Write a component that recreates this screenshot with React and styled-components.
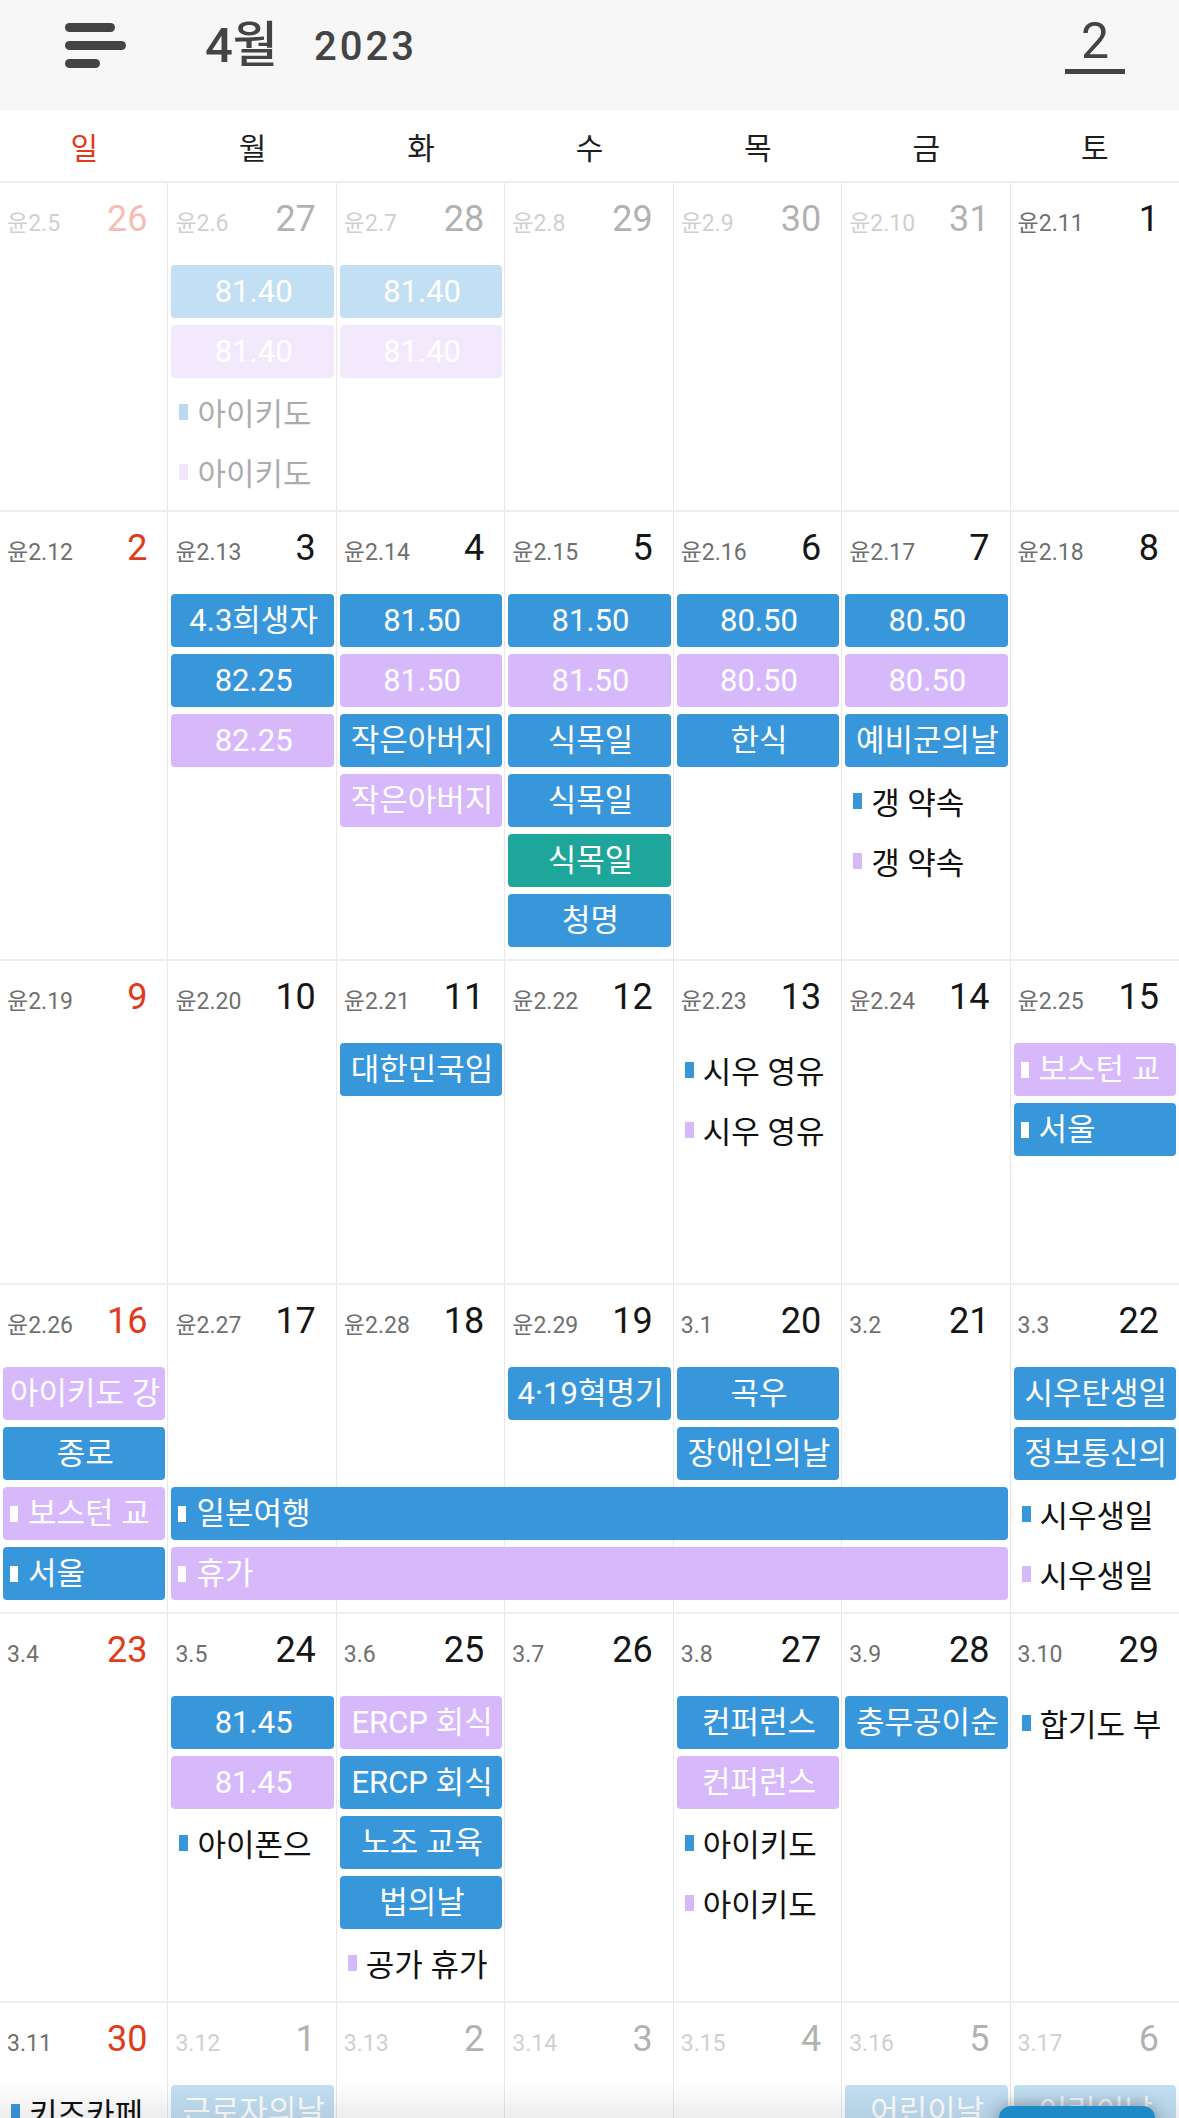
import React from "react";
import styled, { createGlobalStyle } from "styled-components";

const FONT = `Roboto, "Noto Sans CJK KR", sans-serif`;

const COLORS = {
  blue: "#3897da",
  purple: "#d6b8fb",
  teal: "#1fa69a",
};

const WEEKDAYS = ["일", "월", "화", "수", "목", "금", "토"];

// days: [lunar date, solar date, outside this month]
const WEEKS = [
  {
    slots: 4,
    days: [
      ["윤2.5", 26, true],
      ["윤2.6", 27, true],
      ["윤2.7", 28, true],
      ["윤2.8", 29, true],
      ["윤2.9", 30, true],
      ["윤2.10", 31, true],
      ["윤2.11", 1, false],
    ],
    events: [
      { col: 1, slot: 0, color: "blue", label: "81.40", faded: true },
      { col: 1, slot: 1, color: "purple", label: "81.40", faded: true },
      { col: 1, slot: 2, color: "blue", label: "아이키도", kind: "dot", faded: true },
      { col: 1, slot: 3, color: "purple", label: "아이키도", kind: "dot", faded: true },
      { col: 2, slot: 0, color: "blue", label: "81.40", faded: true },
      { col: 2, slot: 1, color: "purple", label: "81.40", faded: true },
    ],
  },
  {
    slots: 6,
    days: [
      ["윤2.12", 2],
      ["윤2.13", 3],
      ["윤2.14", 4],
      ["윤2.15", 5],
      ["윤2.16", 6],
      ["윤2.17", 7],
      ["윤2.18", 8],
    ],
    events: [
      { col: 1, slot: 0, color: "blue", label: "4.3희생자" },
      { col: 1, slot: 1, color: "blue", label: "82.25" },
      { col: 1, slot: 2, color: "purple", label: "82.25" },
      { col: 2, slot: 0, color: "blue", label: "81.50" },
      { col: 2, slot: 1, color: "purple", label: "81.50" },
      { col: 2, slot: 2, color: "blue", label: "작은아버지" },
      { col: 2, slot: 3, color: "purple", label: "작은아버지" },
      { col: 3, slot: 0, color: "blue", label: "81.50" },
      { col: 3, slot: 1, color: "purple", label: "81.50" },
      { col: 3, slot: 2, color: "blue", label: "식목일" },
      { col: 3, slot: 3, color: "blue", label: "식목일" },
      { col: 3, slot: 4, color: "teal", label: "식목일" },
      { col: 3, slot: 5, color: "blue", label: "청명" },
      { col: 4, slot: 0, color: "blue", label: "80.50" },
      { col: 4, slot: 1, color: "purple", label: "80.50" },
      { col: 4, slot: 2, color: "blue", label: "한식" },
      { col: 5, slot: 0, color: "blue", label: "80.50" },
      { col: 5, slot: 1, color: "purple", label: "80.50" },
      { col: 5, slot: 2, color: "blue", label: "예비군의날" },
      { col: 5, slot: 3, color: "blue", label: "갱 약속", kind: "dot" },
      { col: 5, slot: 4, color: "purple", label: "갱 약속", kind: "dot" },
    ],
  },
  {
    slots: 2,
    days: [
      ["윤2.19", 9],
      ["윤2.20", 10],
      ["윤2.21", 11],
      ["윤2.22", 12],
      ["윤2.23", 13],
      ["윤2.24", 14],
      ["윤2.25", 15],
    ],
    events: [
      { col: 2, slot: 0, color: "blue", label: "대한민국임" },
      { col: 4, slot: 0, color: "blue", label: "시우 영유", kind: "dot" },
      { col: 4, slot: 1, color: "purple", label: "시우 영유", kind: "dot" },
      { col: 6, slot: 0, color: "purple", label: "보스턴 교", mark: true },
      { col: 6, slot: 1, color: "blue", label: "서울", mark: true },
    ],
  },
  {
    slots: 4,
    days: [
      ["윤2.26", 16],
      ["윤2.27", 17],
      ["윤2.28", 18],
      ["윤2.29", 19],
      ["3.1", 20],
      ["3.2", 21],
      ["3.3", 22],
    ],
    events: [
      { col: 0, slot: 0, color: "purple", label: "아이키도 강" },
      { col: 0, slot: 1, color: "blue", label: "종로" },
      { col: 0, slot: 2, color: "purple", label: "보스턴 교", mark: true },
      { col: 0, slot: 3, color: "blue", label: "서울", mark: true },
      { col: 3, slot: 0, color: "blue", label: "4·19혁명기" },
      { col: 4, slot: 0, color: "blue", label: "곡우" },
      { col: 4, slot: 1, color: "blue", label: "장애인의날" },
      { col: 6, slot: 0, color: "blue", label: "시우탄생일" },
      { col: 6, slot: 1, color: "blue", label: "정보통신의" },
      { col: 6, slot: 2, color: "blue", label: "시우생일", kind: "dot" },
      { col: 6, slot: 3, color: "purple", label: "시우생일", kind: "dot" },
      { col: 1, span: 5, slot: 2, color: "blue", label: "일본여행", mark: true },
      { col: 1, span: 5, slot: 3, color: "purple", label: "휴가", mark: true },
    ],
  },
  {
    slots: 5,
    days: [
      ["3.4", 23],
      ["3.5", 24],
      ["3.6", 25],
      ["3.7", 26],
      ["3.8", 27],
      ["3.9", 28],
      ["3.10", 29],
    ],
    events: [
      { col: 1, slot: 0, color: "blue", label: "81.45" },
      { col: 1, slot: 1, color: "purple", label: "81.45" },
      { col: 1, slot: 2, color: "blue", label: "아이폰으", kind: "dot" },
      { col: 2, slot: 0, color: "purple", label: "ERCP 회식" },
      { col: 2, slot: 1, color: "blue", label: "ERCP 회식" },
      { col: 2, slot: 2, color: "blue", label: "노조 교육" },
      { col: 2, slot: 3, color: "blue", label: "법의날" },
      { col: 2, slot: 4, color: "purple", label: "공가 휴가", kind: "dot" },
      { col: 4, slot: 0, color: "blue", label: "컨퍼런스" },
      { col: 4, slot: 1, color: "purple", label: "컨퍼런스" },
      { col: 4, slot: 2, color: "blue", label: "아이키도", kind: "dot" },
      { col: 4, slot: 3, color: "purple", label: "아이키도", kind: "dot" },
      { col: 5, slot: 0, color: "blue", label: "충무공이순" },
      { col: 6, slot: 0, color: "blue", label: "합기도 부", kind: "dot" },
    ],
  },
  {
    slots: 1,
    days: [
      ["3.11", 30],
      ["3.12", 1, true],
      ["3.13", 2, true],
      ["3.14", 3, true],
      ["3.15", 4, true],
      ["3.16", 5, true],
      ["3.17", 6, true],
    ],
    events: [
      { col: 0, slot: 0, color: "blue", label: "키즈카페", kind: "dot" },
      { col: 1, slot: 0, color: "blue", label: "근로자의날", faded: true },
      { col: 5, slot: 0, color: "blue", label: "어린이날", faded: true },
      { col: 6, slot: 0, color: "blue", label: "어린이날", faded: true },
    ],
  },
];

const Week = ({ week }) => (
  <WeekGrid $slots={week.slots}>
    {week.days.map(([lunar, date, faded], i) => (
      <DayCell key={i} $col={i}>
        <CellHead $faded={faded}>
          <Lunar>{lunar}</Lunar>
          <DateNum $sunday={i === 0}>{date}</DateNum>
        </CellHead>
      </DayCell>
    ))}
    {week.events.map((ev, i) =>
      ev.kind === "dot" ? (
        <DotItem key={i} $col={ev.col} $slot={ev.slot} $faded={ev.faded}>
          <Marker $color={COLORS[ev.color]} />
          <DotText>{ev.label}</DotText>
        </DotItem>
      ) : (
        <Bar
          key={i}
          $col={ev.col}
          $span={ev.span || 1}
          $slot={ev.slot}
          $color={COLORS[ev.color]}
          $faded={ev.faded}
        >
          {ev.mark && <Marker $color="#ffffff" $small />}
          <BarText $left={ev.mark}>{ev.label}</BarText>
        </Bar>
      )
    )}
  </WeekGrid>
);

export default function App() {
  return (
    <>
      <GlobalStyle />
      <Screen>
        <TopBar>
          <MenuIcon>
            <MenuLine $w={50} />
            <MenuLine $w={61} />
            <MenuLine $w={35} />
          </MenuIcon>
          <Month>4월</Month>
          <Year>2023</Year>
          <TodayBadge>2</TodayBadge>
        </TopBar>

        <WeekdayRow>
          {WEEKDAYS.map((d, i) => (
            <Weekday key={d} $sunday={i === 0}>
              {d}
            </Weekday>
          ))}
        </WeekdayRow>

        {WEEKS.map((w, i) => (
          <Week key={i} week={w} />
        ))}

        <BottomShade />
        <Fab />
      </Screen>
    </>
  );
}

const GlobalStyle = createGlobalStyle`
  html, body {
    margin: 0;
    padding: 0;
    background: #ffffff;
  }
  body {
    font-family: ${FONT};
    color: #222222;
  }
  * {
    box-sizing: border-box;
  }
`;

const Screen = styled.div`
  position: relative;
  width: 100%;
  height: 100vh;
  overflow: hidden;
  background: #ffffff;
`;

const TopBar = styled.header`
  display: flex;
  align-items: center;
  height: 110px;
  padding: 0 54px 20px 65px;
  background: #f7f7f7;
  color: #444444;
`;

const MenuIcon = styled.div`
  display: flex;
  flex-direction: column;
  gap: 9px;
  width: 61px;
`;

const MenuLine = styled.span`
  display: block;
  width: ${(p) => p.$w}px;
  height: 9px;
  border-radius: 5px;
  background: #444444;
`;

const Month = styled.div`
  margin-left: 79px;
  font-size: 49px;
  font-weight: 500;
  line-height: 1;
`;

const Year = styled.div`
  margin-left: 36px;
  margin-top: 4px;
  font-size: 40px;
  font-weight: 500;
  letter-spacing: 3px;
  line-height: 1;
`;

const TodayBadge = styled.div`
  margin-left: auto;
  width: 60px;
  padding-bottom: 3px;
  border-bottom: 5px solid #444444;
  text-align: center;
  font-size: 50px;
  line-height: 50px;
  color: #444444;
`;

const WeekdayRow = styled.div`
  display: grid;
  grid-template-columns: repeat(7, minmax(0, 1fr));
  align-items: center;
  height: 73px;
  border-bottom: 2px solid #eeeeee;
`;

const Weekday = styled.div`
  text-align: center;
  font-size: 30px;
  color: ${(p) => (p.$sunday ? "#e13a1c" : "#1e1e1e")};
`;

const WeekGrid = styled.div`
  display: grid;
  grid-template-columns: repeat(7, minmax(0, 1fr));
  grid-template-rows: 82px repeat(${(p) => p.$slots}, 60px) minmax(5px, 1fr);
  min-height: 324px;
  border-bottom: 2px solid #eeeeee;
`;

const DayCell = styled.div`
  grid-column: ${(p) => p.$col + 1};
  grid-row: 1 / -1;
  min-width: 0;
  border-right: ${(p) => (p.$col === 6 ? "none" : "1px solid #e8e8e8")};
`;

const CellHead = styled.div`
  display: flex;
  align-items: baseline;
  justify-content: space-between;
  padding: 18px 20px 0 7px;
  white-space: nowrap;
  opacity: ${(p) => (p.$faded ? 0.33 : 1)};
`;

const Lunar = styled.span`
  font-size: 23px;
  color: #6f6f6f;
  line-height: 1;
`;

const DateNum = styled.span`
  font-size: 36px;
  line-height: 1;
  color: ${(p) => (p.$sunday ? "#e13a1c" : "#161616")};
`;

const Bar = styled.div`
  grid-column: ${(p) => p.$col + 1} / span ${(p) => p.$span};
  grid-row: ${(p) => p.$slot + 2};
  align-self: start;
  display: flex;
  align-items: center;
  min-width: 0;
  height: 53px;
  margin: 0 3px;
  padding: 0 5px 0 7px;
  border-radius: 4px;
  background: ${(p) => p.$color};
  color: #ffffff;
  font-size: 31px;
  opacity: ${(p) => (p.$faded ? 0.3 : 1)};
`;

const BarText = styled.div`
  flex: 1;
  min-width: 0;
  overflow: hidden;
  white-space: nowrap;
  text-align: ${(p) => (p.$left ? "left" : "center")};
  line-height: 53px;
`;

const DotItem = styled.div`
  grid-column: ${(p) => p.$col + 1};
  grid-row: ${(p) => p.$slot + 2};
  align-self: start;
  display: flex;
  align-items: center;
  min-width: 0;
  height: 53px;
  margin: 0 3px;
  padding-left: 8px;
  font-size: 31px;
  color: #111111;
  opacity: ${(p) => (p.$faded ? 0.35 : 1)};
`;

const Marker = styled.span`
  flex-shrink: 0;
  width: ${(p) => (p.$small ? 8 : 9)}px;
  height: 16px;
  margin-right: ${(p) => (p.$small ? 10 : 9)}px;
  background: ${(p) => p.$color};
`;

const DotText = styled.span`
  overflow: hidden;
  white-space: nowrap;
`;

const BottomShade = styled.div`
  position: absolute;
  left: 0;
  right: 0;
  bottom: 0;
  height: 36px;
  background: linear-gradient(rgba(0, 0, 0, 0), rgba(0, 0, 0, 0.07));
  pointer-events: none;
`;

const Fab = styled.div`
  position: absolute;
  right: 24px;
  bottom: -44px;
  width: 156px;
  height: 56px;
  border-radius: 12px;
  background: #1e8bc8;
  box-shadow: 0 0 16px rgba(0, 0, 0, 0.35);
`;
